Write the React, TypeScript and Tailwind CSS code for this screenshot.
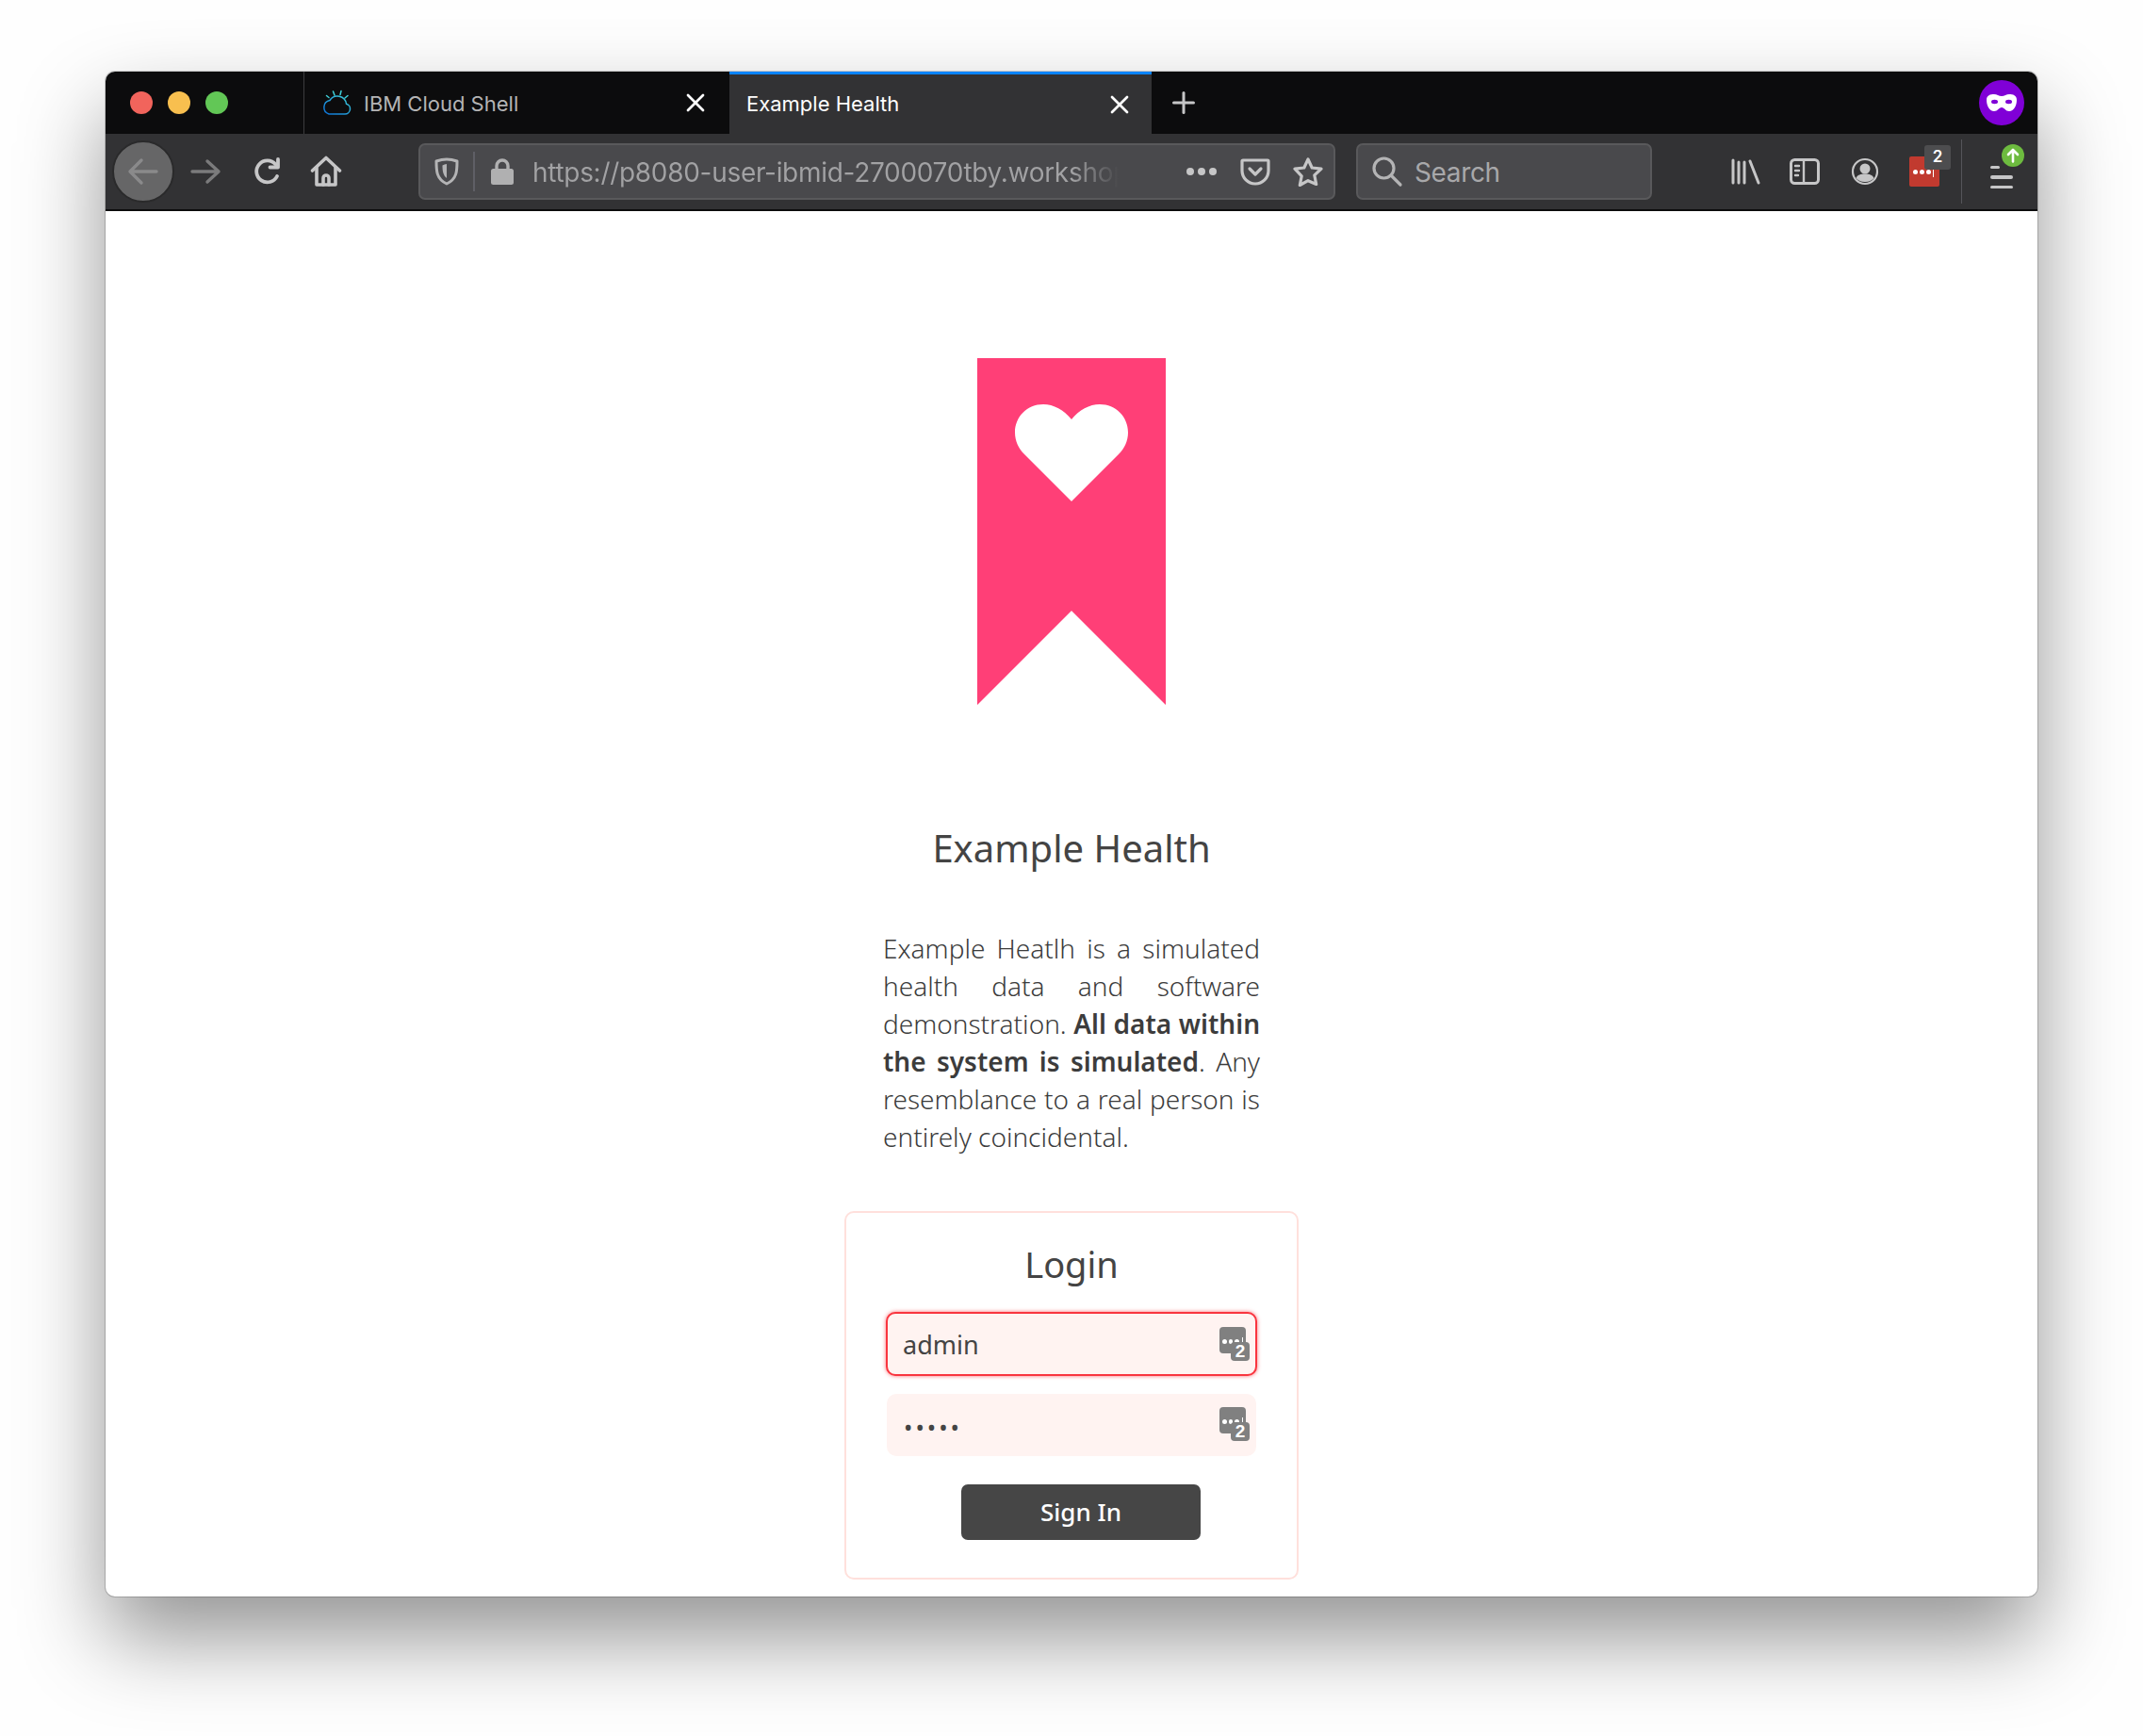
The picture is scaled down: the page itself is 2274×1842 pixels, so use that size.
import { Plus, X } from 'lucide-react'

const ui = 'font-["Inter","Liberation_Sans",sans-serif]'
const plex = 'font-["Noto_Sans","Liberation_Sans",sans-serif]'

function CloudIcon() {
  return (
    <svg width="32" height="30" viewBox="0 0 32 30" fill="none" strokeLinecap="round">
      <defs>
        <linearGradient id="cloudStroke" x1="0" y1="1" x2="1" y2="0">
          <stop offset="0" stopColor="#0b6fd6" />
          <stop offset="1" stopColor="#3fd0d8" />
        </linearGradient>
      </defs>
      <path
        d="M8 27h17a5.5 5.5 0 0 0 1.5-10.8A9.5 9.5 0 0 0 9 12.5 a7.5 7.5 0 0 0-1 14.5z"
        stroke="url(#cloudStroke)"
        strokeWidth="1.5"
      />
      <path d="M14 7 12.5 3M20 6.5 21 2.5M25 10l3-2.5M8 9.5 5.5 7.5" stroke="#3fd0d8" strokeWidth="1.5" />
    </svg>
  )
}

function Arrow({ className }: { className: string }) {
  return (
    <svg width="34" height="28" viewBox="0 0 34 28" fill="none" className={className}>
      <path d="M3 14h28M19 3l12 11-12 11" stroke="currentColor" strokeWidth="3.4" strokeLinecap="round" strokeLinejoin="round" />
    </svg>
  )
}

function BackArrow() {
  return (
    <svg width="34" height="30" viewBox="0 0 34 30" fill="none" className="text-[#8a8a8b]">
      <path d="M31 15H3M15 3 3 15l12 12" stroke="currentColor" strokeWidth="3.4" strokeLinecap="round" strokeLinejoin="round" />
    </svg>
  )
}

function ReloadIcon() {
  return (
    <svg width="32" height="32" viewBox="0 0 32 32" fill="none" stroke="#c6c6c7" strokeWidth="3.8" strokeLinecap="round" strokeLinejoin="round">
      <path d="M26 21a11.5 11.5 0 1 1-1.5-12.5" />
      <path d="M27 3v8.5h-8.5" />
    </svg>
  )
}

function HomeIcon() {
  return (
    <svg width="34" height="34" viewBox="0 0 34 34" fill="none" stroke="#c6c6c7" strokeWidth="3.6" strokeLinejoin="round" strokeLinecap="round">
      <path d="M2.5 16 17 2.5 31.5 16" />
      <path d="M7 13v18h20V13" />
      <path d="M14 31v-7a3 3 0 0 1 6 0v7" />
    </svg>
  )
}

function ShieldIcon() {
  return (
    <svg width="26" height="30" viewBox="0 0 26 30" fill="none">
      <path d="M13 2c4 0 7.500.8 11 2 0 10 0 19-11 24C2 23 2 14 2 4c3.500-1.200 7-2 11-2z" stroke="#b4b4b5" strokeWidth="3" strokeLinejoin="round" />
      <path d="M13 7v15c-4-3-4.500-8-4.500-13.500A16 16 0 0 1 13 7z" fill="#b4b4b5" />
    </svg>
  )
}

function LockIcon() {
  return (
    <svg width="26" height="30" viewBox="0 0 26 30" fill="none">
      <path d="M7 13V9a6 6 0 0 1 12 0v4" stroke="#b0b0b1" strokeWidth="3.4" />
      <rect x="1" y="12" width="24" height="17" rx="2.500" fill="#b0b0b1" />
    </svg>
  )
}

function PocketIcon() {
  return (
    <svg width="32" height="30" viewBox="0 0 32 30" fill="none" stroke="#c6c6c7" strokeWidth="3.2" strokeLinejoin="round" strokeLinecap="round">
      <path d="M3 3h26a1 1 0 0 1 1 1v10a14 14 0 0 1-28 0V4a1 1 0 0 1 1-1z" />
      <path d="m10 12 6 6 6-6" />
    </svg>
  )
}

function StarIcon() {
  return (
    <svg width="34" height="32" viewBox="0 0 34 32" fill="none" stroke="#c6c6c7" strokeWidth="3.2" strokeLinejoin="round">
      <path d="m17 3 4.200 9 9.800 1.200-7.200 6.700 1.900 9.600L17 25.700 8.300 30.500l1.900-9.600L3 13.200 12.800 12z" />
    </svg>
  )
}

function SearchIcon() {
  return (
    <svg width="34" height="34" viewBox="0 0 34 34" fill="none" stroke="#b4b4b5" strokeWidth="3.2" strokeLinecap="round">
      <circle cx="13.500" cy="13.500" r="10.500" />
      <path d="m21 21 10 10" />
    </svg>
  )
}

function LibraryIcon() {
  return (
    <svg width="32" height="28" viewBox="0 0 32 28" fill="none" stroke="#c6c6c7" strokeWidth="3" strokeLinecap="round">
      <path d="M2 2v24M8 4v22M14 4v22M20 3l9 23" />
    </svg>
  )
}

function SidebarIcon() {
  return (
    <svg width="32" height="28" viewBox="0 0 32 28" fill="none" stroke="#c6c6c7" strokeWidth="3" strokeLinecap="round">
      <rect x="1.500" y="1.500" width="29" height="25" rx="4" />
      <path d="M15 2v24M6 8h4M6 13h4M6 18h3" strokeWidth="2.400" />
    </svg>
  )
}

function AccountIcon() {
  return (
    <svg width="30" height="30" viewBox="0 0 30 30" fill="none">
      <circle cx="15" cy="15" r="13" stroke="#c6c6c7" strokeWidth="2.200" />
      <circle cx="15" cy="12" r="5.500" fill="#c6c6c7" />
      <path d="M5.500 22c1.500-3.500 5-4.500 9.500-4.500s8 1 9.500 4.500A12 12 0 0 1 15 26a12 12 0 0 1-9.500-4z" fill="#c6c6c7" />
    </svg>
  )
}

function LastPassButton() {
  return (
    <div className="relative flex h-[32px] w-[32px] items-center justify-start gap-[2px] rounded-[2px] bg-[#c13a2f] pl-[4px]">
      <span className="h-[5px] w-[5px] rounded-full bg-white" />
      <span className="h-[5px] w-[5px] rounded-full bg-white" />
      <span className="h-[5px] w-[5px] rounded-full bg-white" />
      <span className="h-[12px] w-[1px] bg-white" />
      <span className={`absolute left-[16px] top-[-12px] flex h-[26px] w-[28px] items-center justify-center rounded-[3px] bg-[#4d4d4f] text-[17px] font-semibold text-white ${ui}`}>
        2
      </span>
    </div>
  )
}

function MenuButton() {
  return (
    <div className="relative flex h-[24px] w-[24px] flex-col justify-between">
      <span className="h-[3px] w-[10px] rounded-full bg-[#c6c6c7]" />
      <span className="h-[3.500px] w-[24px] rounded-full bg-[#c6c6c7]" />
      <span className="h-[3.500px] w-[24px] rounded-full bg-[#c6c6c7]" />
      <span className="absolute left-[12px] top-[-23px] flex h-[24px] w-[24px] items-center justify-center rounded-full bg-[#6dbb3f]">
        <svg width="14" height="16" viewBox="0 0 14 16" fill="none" stroke="#fff" strokeWidth="2.600" strokeLinecap="round" strokeLinejoin="round">
          <path d="M7 14.500V2M2 7l5-5 5 5" />
        </svg>
      </span>
    </div>
  )
}

function PrivateMask() {
  return (
    <div className="flex h-[48px] w-[48px] items-center justify-center rounded-full bg-[#8000d7]">
      <svg width="32" height="20" viewBox="0 0 32 20" fill="#fff">
        <path d="M8 1c3 0 5 2 8 2s5-2 8-2c4 0 8 1 8 6 0 6-3 12-8 12-4 0-5-4-8-4s-4 4-8 4C3 19 0 13 0 7c0-5 4-6 8-6z" />
        <ellipse cx="8.500" cy="9" rx="3.500" ry="2.200" fill="#8000d7" />
        <ellipse cx="23.500" cy="9" rx="3.500" ry="2.200" fill="#8000d7" />
      </svg>
    </div>
  )
}

function PasswordKeyIcon() {
  return (
    <div className="relative h-[36px] w-[32px]">
      <div className="flex h-[28px] w-[28px] items-center gap-[2px] rounded-[4px] bg-[#808080] pl-[3px] pt-[3px]">
        <span className="h-[4.500px] w-[4.500px] rounded-full bg-white" />
        <span className="h-[4.500px] w-[4.500px] rounded-full bg-white" />
        <span className="h-[4.500px] w-[4.500px] rounded-full bg-white" />
        <span className="ml-[1px] h-[10px] w-[1.500px] bg-white" />
      </div>
      <span className="absolute bottom-0 right-0 flex h-[20px] w-[20px] items-center justify-center rounded-[4px] bg-[#808080] font-['Liberation_Sans',sans-serif] text-[19px] font-bold text-white">
        2
      </span>
    </div>
  )
}

function TabBar() {
  return (
    <div className={`flex h-[66px] bg-[#0c0c0d] ${ui}`}>
      <div className="flex w-[211px] items-center gap-[16px] border-r border-[#3c3c3e] pl-[26px]">
        <span className="h-[24px] w-[24px] rounded-full bg-[#f1645c]" />
        <span className="h-[24px] w-[24px] rounded-full bg-[#f8bf4f]" />
        <span className="h-[24px] w-[24px] rounded-full bg-[#62c756]" />
      </div>
      <div className="flex w-[451px] items-center pl-[18px] pr-[20px]">
        <CloudIcon />
        <span className="ml-[13px] flex-1 pt-[2px] text-[22px] text-[#b4b4b5]">IBM Cloud Shell</span>
        <X className="h-[32px] w-[32px] text-white" strokeWidth={2} />
      </div>
      <div className="flex w-[448px] items-center border-t-[3px] border-[#0a84ff] bg-[#323234] pl-[18px] pr-[18px]">
        <span className="flex-1 text-[22px] text-white">Example Health</span>
        <X className="h-[32px] w-[32px] text-white" strokeWidth={2} />
      </div>
      <div className="flex flex-1 items-center justify-between pl-[16px] pr-[14px]">
        <Plus className="h-[36px] w-[36px] text-[#c6c6c7]" strokeWidth={2} />
        <PrivateMask />
      </div>
    </div>
  )
}

function Toolbar() {
  return (
    <div className={`flex h-[82px] items-center border-b-2 border-[#0c0c0d] bg-[#323234] pl-[7px] ${ui}`}>
      <div className="flex h-[66px] w-[66px] items-center justify-center rounded-full border-2 border-[#2a2a2b] bg-[#666667]">
        <BackArrow />
      </div>
      <div className="ml-[16px] flex items-center">
        <Arrow className="text-[#7b7b7c]" />
      </div>
      <div className="ml-[33px]"><ReloadIcon /></div>
      <div className="ml-[29px]"><HomeIcon /></div>

      <div className="ml-[81px] flex h-[60px] w-[973px] items-center rounded-[7px] border-2 border-[#59595b] bg-[#49494c]">
        <div className="ml-[15px]"><ShieldIcon /></div>
        <span className="ml-[15px] h-[42px] w-[2px] bg-[#5f5f66]" />
        <div className="ml-[16px]"><LockIcon /></div>
        <div className="ml-[19px] w-[622px] overflow-hidden whitespace-nowrap bg-gradient-to-r from-[#a2a2a4] from-[92%] to-transparent bg-clip-text pt-[2px] text-[28px] tracking-[-0.3px] text-transparent">
          https://p8080-user-ibmid-2700070tby.workshop
        </div>
        <div className="ml-[72px] flex gap-[4px]">
          <span className="h-[8px] w-[8px] rounded-full bg-[#c6c6c7]" />
          <span className="h-[8px] w-[8px] rounded-full bg-[#c6c6c7]" />
          <span className="h-[8px] w-[8px] rounded-full bg-[#c6c6c7]" />
        </div>
        <div className="ml-[25px]"><PocketIcon /></div>
        <div className="ml-[23px]"><StarIcon /></div>
      </div>

      <div className="ml-[22px] flex h-[60px] w-[314px] items-center rounded-[7px] border-2 border-[#59595b] bg-[#49494c] pl-[14px]">
        <SearchIcon />
        <span className="ml-[12px] pt-[2px] text-[28px] tracking-[-0.35px] text-[#a8a8aa]">Search</span>
      </div>

      <div className="ml-[84px]"><LibraryIcon /></div>
      <div className="ml-[30px]"><SidebarIcon /></div>
      <div className="ml-[33px]"><AccountIcon /></div>
      <div className="ml-[32px]"><LastPassButton /></div>
      <span className="ml-[23px] h-[68px] w-[1px] bg-[#55555a]" />
      <div className="ml-[30px] mt-[12px]"><MenuButton /></div>
    </div>
  )
}

function Logo() {
  return (
    <svg width="200" height="368" viewBox="0 0 200 368">
      <path d="M0 0h200v368L100 268 0 368z" fill="#ff3f77" />
      <path
        d="M100 152 50 102C44 96 40 88 40 79 40 62 53 49 70 49 81 49 92 55 100 65 108 55 119 49 130 49 147 49 160 62 160 79 160 88 156 96 150 102z"
        fill="#fff"
      />
    </svg>
  )
}

function LoginCard() {
  return (
    <div className={`mt-[59px] flex h-[391px] w-[482px] flex-col items-center rounded-[10px] border-2 border-[#ffe0dc] ${plex}`}>
      <h2 className="mt-[27px] text-[38px] leading-[54px] text-[#444]">Login</h2>
      <div className="relative mt-[24px] h-[68px] w-[394px] rounded-[10px] border-2 border-[#f9353f] bg-[#fff3f1] shadow-[0_0_4px_rgba(249,53,63,0.7)]">
        <input readOnly value="admin" className="h-full w-full bg-transparent pl-[16px] text-[27px] text-[#444] outline-none" />
        <div className="absolute right-[6px] top-[14px]"><PasswordKeyIcon /></div>
      </div>
      <div className="relative mt-[19px] h-[66px] w-[392px] rounded-[10px] bg-[#fff3f1]">
        <input readOnly type="password" value="admin" className="h-full w-full bg-transparent pl-[18px] pt-[3px] text-[25px] tracking-[3px] text-[#444] outline-none" />
        <div className="absolute right-[7px] top-[14px]"><PasswordKeyIcon /></div>
      </div>
      <button className="ml-[20px] mt-[30px] h-[59px] w-[254px] rounded-[7px] bg-[#464646] text-[26px] font-medium text-white">Sign In</button>
    </div>
  )
}

export default function App() {
  return (
    <div className="h-[1842px] w-[2274px] overflow-hidden bg-[#fefefe] pl-[112px] pt-[76px]">
      <div className="h-[1618px] w-[2050px] overflow-hidden rounded-[10px] bg-white shadow-[0_44px_90px_rgba(0,0,0,0.42),0_0_0_1px_rgba(0,0,0,0.18)]">
        <TabBar />
        <Toolbar />
        <main className={`flex flex-col items-center pt-[156px] text-[#444] ${plex}`}>
          <Logo />
          <h1 className="mt-[125px] text-[40px] leading-[54px]">Example Health</h1>
          <p className="mt-[59px] w-[400px] text-justify text-[28px] leading-[40px] font-light text-[#3c3c3c]">
            Example Heatlh is a simulated health data and software demonstration. <strong className="font-semibold">All data within the system is simulated</strong>. Any resemblance to a real person is entirely coincidental.
          </p>
          <LoginCard />
        </main>
      </div>
    </div>
  )
}
